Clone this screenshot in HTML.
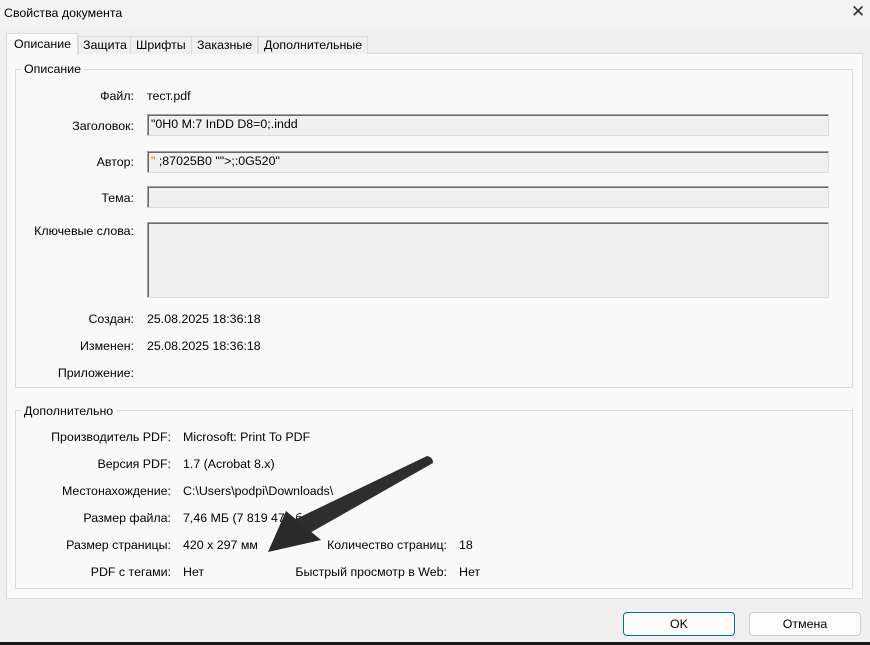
<!DOCTYPE html>
<html><head><meta charset="utf-8"><style>
*{box-sizing:border-box;margin:0;padding:0}
body{width:870px;height:645px;background:#f0f0f0;font-family:"Liberation Sans",sans-serif;font-size:12.4px;color:#000;position:relative;overflow:hidden}
.a{position:absolute;white-space:nowrap}
.r{text-align:right}
.tb{position:absolute;background:#f0f0f0;border:1px solid #a0a0a0;border-right-color:#dcdcdc;border-bottom-color:#dcdcdc;box-shadow:inset 1px 1px 0 #696969;padding:2px 3px;font-size:12.4px}
.grp{position:absolute;border:1px solid #dcdcdc}
.btn{position:absolute;background:#fdfdfd;border:1px solid #d0d0d0;border-radius:4px;text-align:center;line-height:22px;font-size:12.4px}
</style></head><body>
<div class="a" style="left:0;top:0;width:870px;height:28px;background:#f3f3f3"></div>
<div class="a" style="left:4px;top:6px">Свойства документа</div>
<div class="a" style="left:851px;top:2px;font-size:17px;color:#333">✕</div>
<div class="a" style="left:6px;top:53px;width:857px;height:546px;background:#f9f9f9;border:1px solid #dcdcdc"></div>
<div class="a" style="left:6px;top:33px;width:72px;height:22px;background:#f9f9f9;border:1px solid #dcdcdc;border-bottom:none"></div>
<div class="a" style="left:14px;top:37px">Описание</div>
<div class="a" style="left:78px;top:36px;width:180px;height:18px;background:#f0f0f0;border:1px solid #dcdcdc;border-bottom:none"></div>
<div class="a" style="left:130px;top:36px;width:1px;height:18px;background:#dcdcdc"></div>
<div class="a" style="left:191px;top:36px;width:1px;height:18px;background:#dcdcdc"></div>
<div class="a" style="left:258px;top:36px;width:110px;height:18px;background:#f0f0f0;border:1px solid #dcdcdc;border-bottom:none"></div>
<div class="a" style="left:83px;top:38px">Защита</div>
<div class="a" style="left:136px;top:38px">Шрифты</div>
<div class="a" style="left:197px;top:38px">Заказные</div>
<div class="a" style="left:264px;top:38px">Дополнительные</div>
<div class="grp" style="left:15px;top:69px;width:838px;height:319px"></div>
<div class="a" style="left:21px;top:62px;background:#f9f9f9;padding:0 3px">Описание</div>
<div class="a r" style="left:0;width:134px;top:89px">Файл:</div>
<div class="a" style="left:147px;top:89px">тест.pdf</div>
<div class="a r" style="left:0;width:134px;top:119px">Заголовок:</div>
<div class="tb" style="left:147px;top:114px;width:682px;height:22px">"0H0 M:7 InDD D8=0;.indd</div>
<div class="a r" style="left:0;width:134px;top:155px">Автор:</div>
<div class="tb" style="left:147px;top:151px;width:682px;height:22px"><span style="color:#e07000">"</span> ;87025B0 ""&gt;;:0G520"</div>
<div class="a r" style="left:0;width:134px;top:191px">Тема:</div>
<div class="tb" style="left:147px;top:186px;width:682px;height:22px"></div>
<div class="a r" style="left:0;width:134px;top:224px">Ключевые слова:</div>
<div class="tb" style="left:147px;top:222px;width:682px;height:76px"></div>
<div class="a r" style="left:0;width:134px;top:312px">Создан:</div>
<div class="a" style="left:147px;top:312px">25.08.2025 18:36:18</div>
<div class="a r" style="left:0;width:134px;top:339px">Изменен:</div>
<div class="a" style="left:147px;top:339px">25.08.2025 18:36:18</div>
<div class="a r" style="left:0;width:134px;top:366px">Приложение:</div>
<div class="grp" style="left:15px;top:410px;width:838px;height:179px"></div>
<div class="a" style="left:21px;top:404px;background:#f9f9f9;padding:0 3px">Дополнительно</div>
<div class="a r" style="left:0;width:171px;top:430px">Производитель PDF:</div>
<div class="a" style="left:183px;top:430px">Microsoft: Print To PDF</div>
<div class="a r" style="left:0;width:171px;top:457px">Версия PDF:</div>
<div class="a" style="left:183px;top:457px">1.7 (Acrobat 8.x)</div>
<div class="a r" style="left:0;width:171px;top:484px">Местонахождение:</div>
<div class="a" style="left:183px;top:484px">C:\Users\podpi\Downloads\</div>
<div class="a r" style="left:0;width:171px;top:511px">Размер файла:</div>
<div class="a" style="left:183px;top:511px">7,46 МБ (7 819 471 байт)</div>
<div class="a r" style="left:0;width:171px;top:538px">Размер страницы:</div>
<div class="a" style="left:183px;top:538px">420 x 297 мм</div>
<div class="a r" style="left:0;width:447px;top:538px">Количество страниц:</div>
<div class="a" style="left:459px;top:538px">18</div>
<div class="a r" style="left:0;width:171px;top:565px">PDF с тегами:</div>
<div class="a" style="left:183px;top:565px">Нет</div>
<div class="a r" style="left:0;width:447px;top:565px">Быстрый просмотр в Web:</div>
<div class="a" style="left:459px;top:565px">Нет</div>
<svg class="a" style="left:0;top:0" width="870" height="645">
<path d="M427 456 Q433 457 433 463 L308 534 L296 519 Z" fill="#2e2e2e"/>
<path d="M268 552 L286 511 L321 540 Z" fill="#2a2a2a"/>
</svg>
<div class="btn" style="left:623px;top:612px;width:112px;height:24px;border:1px solid #0067c0">OK</div>
<div class="btn" style="left:749px;top:612px;width:112px;height:24px">Отмена</div>
<div class="a" style="left:0;top:642px;width:870px;height:3px;background:#1a1a1a"></div>
</body></html>
